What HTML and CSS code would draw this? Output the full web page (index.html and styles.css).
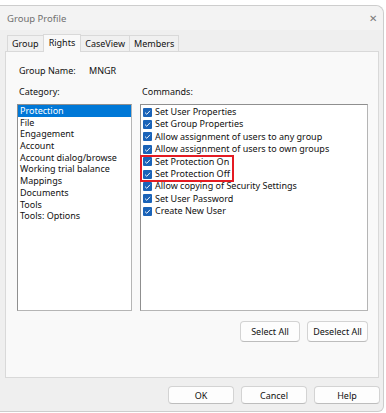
FILE: index.html
```html
<!DOCTYPE html>
<html lang="en">
  <head>
    <meta charset="UTF-8" />
    <title>Group Profile</title>
    <link rel="stylesheet" href="styles.css">
  </head>
  <body>
    <div class="dialog">
      <div class="titlebar">
        <span class="title">Group Profile</span>
        <span class="close">&#x2715;</span>
      </div>

      <div class="tabs">
        <div class="tab">Group</div>
        <div class="tab active">Rights</div>
        <div class="tab">CaseView</div>
        <div class="tab">Members</div>
      </div>

      <div class="panel">
        <div class="name-row">
          <span class="name-label">Group Name:</span>
          <span>MNGR</span>
        </div>

        <div class="columns">
          <div class="col col-left">
            <div class="col-label">Category:</div>
            <ul class="listbox categories">
              <li class="selected">Protection</li>
              <li>File</li>
              <li>Engagement</li>
              <li>Account</li>
              <li>Account dialog/browse</li>
              <li>Working trial balance</li>
              <li>Mappings</li>
              <li>Documents</li>
              <li>Tools</li>
              <li>Tools: Options</li>
            </ul>
          </div>
          <div class="col col-right">
            <div class="col-label">Commands:</div>
            <ul class="listbox commands">
              <li><span class="check"></span>Set User Properties</li>
              <li><span class="check"></span>Set Group Properties</li>
              <li><span class="check"></span>Allow assignment of users to any group</li>
              <li><span class="check"></span>Allow assignment of users to own groups</li>
              <li class="marked">
                <div class="mark-box"></div>
                <span class="check"></span>Set Protection On
              </li>
              <li><span class="check"></span>Set Protection Off</li>
              <li><span class="check"></span>Allow copying of Security Settings</li>
              <li><span class="check"></span>Set User Password</li>
              <li><span class="check"></span>Create New User</li>
            </ul>
          </div>
        </div>

        <div class="select-row">
          <button class="btn btn-select">Select All</button>
          <button class="btn btn-deselect">Deselect All</button>
        </div>
      </div>

      <div class="footer">
        <button class="btn btn-foot">OK</button>
        <button class="btn btn-foot">Cancel</button>
        <button class="btn btn-foot">Help</button>
      </div>
    </div>
  </body>
</html>
```

FILE: styles.css
```css
* {
  margin: 0;
  padding: 0;
  box-sizing: border-box;
  font-family: "Noto Sans", "Open Sans", sans-serif;
}
html,
body {
  overflow: hidden;
  background: #ffffff;
}
body {
  width: 386px;
  height: 413px;
  padding-top: 5px;
}
.dialog {
  width: 384px;
  height: 407px;
  background-color: #efefef;
  border: 1px solid #cdcdcd;
  border-left: none;
  border-radius: 0 8px 6px 0;
  font-size: 9px;
  color: #111111;
}
.titlebar {
  height: 24px;
  display: flex;
  align-items: center;
  justify-content: space-between;
  padding: 0 6px 0 7px;
  background-color: #f3f3f3;
  border-radius: 0 8px 0 0;
}
.title {
  color: #707070;
  font-size: 9.5px;
}
.close {
  color: #7a7a7a;
  font-size: 10px;
}
.tabs {
  display: flex;
  align-items: flex-end;
  height: 21px;
  padding-left: 7px;
}
.tab {
  height: 16px;
  line-height: 15px;
  padding: 0 4px;
  border: 1px solid #d9d9d9;
  border-bottom: none;
  background-color: #f0f0f0;
  margin-right: -1px;
}
.tab.active {
  height: 18px;
  line-height: 15px;
  background-color: #f9f9f9;
  padding: 0 5px;
  margin-bottom: -1px;
  position: relative;
  z-index: 1;
}
.panel {
  width: 374px;
  height: 327px;
  margin-left: 5px;
  background-color: #f9f9f9;
  border: 1px solid #d9d9d9;
  padding: 12px 9px 0 11px;
}
.name-row {
  display: flex;
  height: 13px;
  line-height: 13px;
  padding-left: 2px;
}
.name-label {
  width: 70px;
}
.columns {
  display: flex;
  gap: 8px;
  margin-top: 8px;
}
.col-left {
  width: 115px;
}
.col-right {
  width: 228px;
}
.col-label {
  height: 13px;
  line-height: 13px;
  padding-left: 2px;
  margin-bottom: 6px;
}
.listbox {
  list-style: none;
  height: 207px;
  background-color: #ffffff;
  border: 1px solid #8f8f8f;
  border-right-color: #b5b5b5;
  border-bottom-color: #b5b5b5;
}
.categories li {
  height: 11.7px;
  line-height: 11.7px;
  padding-left: 2px;
  white-space: nowrap;
}
.categories li.selected {
  background-color: #0078d7;
  color: #ffffff;
}
.commands {
  padding-top: 1px;
}
.commands li {
  height: 12.4px;
  line-height: 12.4px;
  display: flex;
  align-items: center;
  padding-left: 2px;
  white-space: nowrap;
}
.check {
  width: 9px;
  height: 9px;
  margin-right: 3px;
  border-radius: 1px;
  background-color: #1a63b8;
  background-image: url("data:image/svg+xml,%3Csvg xmlns='http://www.w3.org/2000/svg' viewBox='0 0 9 9'%3E%3Cpath d='M2 4.6 L3.8 6.3 L7 2.8' fill='none' stroke='%23ffffff' stroke-width='0.9'/%3E%3C/svg%3E");
}
.marked {
  position: relative;
}
.mark-box {
  position: absolute;
  left: -1px;
  top: -1px;
  width: 94px;
  height: 27px;
  border: 2px solid #e41b23;
}
.select-row {
  display: flex;
  justify-content: flex-end;
  gap: 7px;
  margin-top: 10px;
  padding-right: 1px;
}
.btn {
  height: 21px;
  font-size: 9px;
  color: #111111;
  background-color: #fdfdfd;
  border: 1px solid #d3d3d3;
  border-bottom-color: #bdbdbd;
  border-radius: 4px;
}
.btn-select {
  width: 60px;
}
.btn-deselect {
  width: 61px;
}
.footer {
  display: flex;
  gap: 7px;
  padding-left: 168px;
  margin-top: 8px;
}
.btn-foot {
  width: 66px;
  height: 18px;
}
```
